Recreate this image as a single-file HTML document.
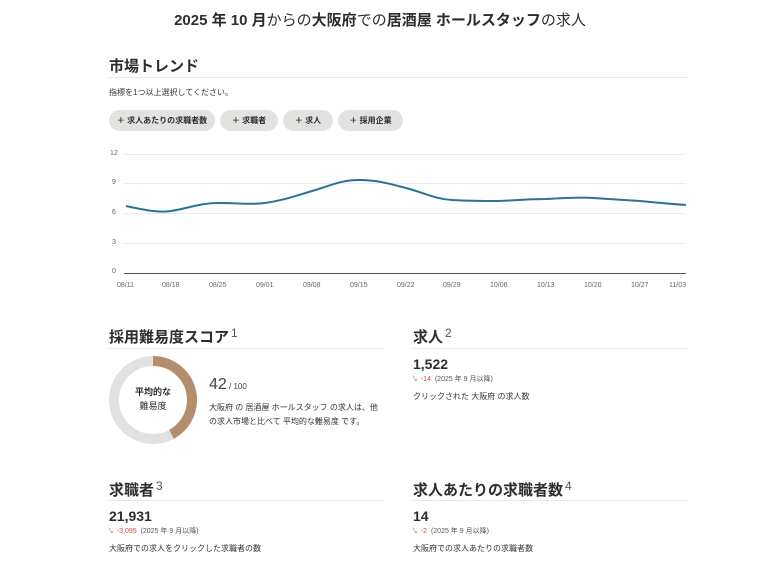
<!DOCTYPE html>
<html><head><meta charset="utf-8"><style>
body{margin:0;width:760px;height:570px;background:#fff;font-family:"Liberation Sans","Noto Sans CJK JP",sans-serif;color:#2d2d2d;position:relative;overflow:hidden}
.a{position:absolute;white-space:nowrap}
h1{position:absolute;margin:0;font-size:15px;font-weight:bold;left:0;width:760px;text-align:center;top:9px}
.h2{font-size:15px;font-weight:bold}
.hr{position:absolute;height:1px;background:#e8e8e8}
.pill{position:absolute;top:110px;height:21px;border-radius:11px;background:#e4e2e0;font-size:8px;font-weight:bold;line-height:21px;text-align:center}
.big{font-size:14px;font-weight:bold}
.sm{font-size:8px;color:#333}
.ax{font-size:7px;color:#666;position:absolute}
sup{font-size:12px;font-weight:normal;color:#555;vertical-align:5px;margin-left:2px}
.red{color:#c0553a}
</style></head><body>
<h1>2025 年 10 月<span style="font-weight:normal">からの</span>大阪府<span style="font-weight:normal">での</span>居酒屋 ホールスタッフ<span style="font-weight:normal">の求人</span></h1>
<div class="a h2" style="left:109px;top:55px">市場トレンド</div>
<div class="hr" style="left:109px;top:77px;width:579px"></div>
<div class="a sm" style="left:109px;top:87px">指標を1つ以上選択してください。</div>
<div class="pill" style="left:109px;width:106px">＋ 求人あたりの求職者数</div>
<div class="pill" style="left:220px;width:58px">＋ 求職者</div>
<div class="pill" style="left:283px;width:50px">＋ 求人</div>
<div class="pill" style="left:338px;width:65px">＋ 採用企業</div>
<svg class="a" style="left:0;top:0" width="760" height="300">
<g stroke="#ececec" stroke-width="1"><line x1="124" y1="154.5" x2="686" y2="154.5"/><line x1="124" y1="183.5" x2="686" y2="183.5"/><line x1="124" y1="213.5" x2="686" y2="213.5"/><line x1="124" y1="243.5" x2="686" y2="243.5"/></g>
<line x1="124" y1="273.5" x2="686" y2="273.5" stroke="#555"/>
<path d="M126 206 C145 210,158 213,171 211 C190 208,200 203,218 203 C240 203,250 205,265 203 C285 200,295 196,312 191 C330 186,340 180,359 180 C378 180,390 184,406 188 C425 193,435 199,452 200 C470 201,485 201,499 201 C520 200,530 199,546 199 C565 198,580 197,593 198 C610 199,625 200,640 201 C660 203,672 204,686 205" fill="none" stroke="#2a7391" stroke-width="2"/>
</svg>
<div class="ax" style="left:110px;top:150px">12</div>
<div class="ax" style="left:112px;top:179px">9</div>
<div class="ax" style="left:112px;top:209px">6</div>
<div class="ax" style="left:112px;top:239px">3</div>
<div class="ax" style="left:112px;top:268px">0</div>
<div class="ax" style="left:117px;top:282px">08/11</div>
<div class="ax" style="left:162px;top:282px">08/18</div>
<div class="ax" style="left:209px;top:282px">08/25</div>
<div class="ax" style="left:256px;top:282px">09/01</div>
<div class="ax" style="left:303px;top:282px">09/08</div>
<div class="ax" style="left:350px;top:282px">09/15</div>
<div class="ax" style="left:397px;top:282px">09/22</div>
<div class="ax" style="left:443px;top:282px">09/29</div>
<div class="ax" style="left:490px;top:282px">10/06</div>
<div class="ax" style="left:537px;top:282px">10/13</div>
<div class="ax" style="left:584px;top:282px">10/20</div>
<div class="ax" style="left:631px;top:282px">10/27</div>
<div class="ax" style="left:669px;top:282px">11/03</div>

<div class="a h2" style="left:109px;top:326px">採用難易度スコア<sup>1</sup></div>
<div class="hr" style="left:109px;top:348px;width:276px"></div>
<svg class="a" style="left:108px;top:355px" width="90" height="90">
<circle cx="45" cy="45" r="39" fill="none" stroke="#e3e1df" stroke-width="10"/>
<circle cx="45" cy="45" r="39" fill="none" stroke="#b48d6d" stroke-width="10" stroke-dasharray="103 300" transform="rotate(-90 45 45)"/>
</svg>
<div class="a" style="left:108px;top:385px;width:90px;text-align:center;font-size:9px;line-height:14px"><b>平均的な</b><br>難易度</div>
<div class="a" style="left:209px;top:376px;font-size:16px;color:#444">42<span style="font-size:8px"> / 100</span></div>
<div class="a sm" style="left:209px;top:401px;line-height:14px">大阪府 の 居酒屋 ホールスタッフ の求人は、他<br>の求人市場と比べて 平均的な難易度 です。</div>

<div class="a h2" style="left:413px;top:326px">求人<sup>2</sup></div>
<div class="hr" style="left:413px;top:348px;width:276px"></div>
<div class="a big" style="left:413px;top:356px">1,522</div>
<div class="a" style="left:413px;top:374px;font-size:7px;color:#555"><span class="red">⤥ &nbsp;-14</span> &nbsp;(2025 年 9 月以降)</div>
<div class="a sm" style="left:413px;top:391px">クリックされた 大阪府 の求人数</div>

<div class="a h2" style="left:109px;top:479px">求職者<sup>3</sup></div>
<div class="hr" style="left:109px;top:500px;width:276px"></div>
<div class="a big" style="left:109px;top:508px">21,931</div>
<div class="a" style="left:109px;top:526px;font-size:7px;color:#555"><span class="red">⤥ &nbsp;-3,095</span> &nbsp;(2025 年 9 月以降)</div>
<div class="a sm" style="left:109px;top:543px">大阪府での求人をクリックした求職者の数</div>

<div class="a h2" style="left:413px;top:479px">求人あたりの求職者数<sup>4</sup></div>
<div class="hr" style="left:413px;top:500px;width:276px"></div>
<div class="a big" style="left:413px;top:508px">14</div>
<div class="a" style="left:413px;top:526px;font-size:7px;color:#555"><span class="red">⤥ &nbsp;-2</span> &nbsp;(2025 年 9 月以降)</div>
<div class="a sm" style="left:413px;top:543px">大阪府での求人あたりの求職者数</div>
</body></html>
